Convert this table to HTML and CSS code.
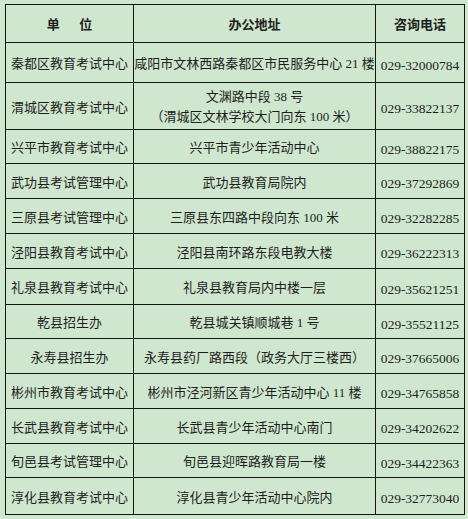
FILE: index.html
```html
<!DOCTYPE html>
<html lang="zh-CN">
<head>
<meta charset="utf-8">
<title>咨询电话</title>
<link rel="stylesheet" href="styles.css">
</head>
<body>
<table class="contacts">
  <colgroup>
    <col class="c-unit">
    <col class="c-addr">
    <col class="c-tel">
  </colgroup>
  <thead>
    <tr class="h38">
      <th>单&emsp;&ensp;位</th>
      <th>办公地址</th>
      <th>咨询电话</th>
    </tr>
  </thead>
  <tbody>
    <tr class="h40"><td>秦都区教育考试中心</td><td class="addr">咸阳市文林西路秦都区市民服务中心 21 楼</td><td class="tel">029-32000784</td></tr>
    <tr class="h47"><td>渭城区教育考试中心</td><td class="addr two">文渊路中段 38 号<br>（渭城区文林学校大门向东 100 米）</td><td class="tel">029-33822137</td></tr>
    <tr class="h34"><td>兴平市教育考试中心</td><td class="addr">兴平市青少年活动中心</td><td class="tel">029-38822175</td></tr>
    <tr class="h35"><td>武功县考试管理中心</td><td class="addr">武功县教育局院内</td><td class="tel">029-37292869</td></tr>
    <tr class="h35"><td>三原县考试管理中心</td><td class="addr">三原县东四路中段向东 100 米</td><td class="tel">029-32282285</td></tr>
    <tr class="h35"><td>泾阳县教育考试中心</td><td class="addr">泾阳县南环路东段电教大楼</td><td class="tel">029-36222313</td></tr>
    <tr class="h36"><td>礼泉县教育考试中心</td><td class="addr">礼泉县教育局内中楼一层</td><td class="tel">029-35621251</td></tr>
    <tr class="h34"><td>乾县招生办</td><td class="addr">乾县城关镇顺城巷 1 号</td><td class="tel">029-35521125</td></tr>
    <tr class="h35"><td>永寿县招生办</td><td class="addr">永寿县药厂路西段（政务大厅三楼西）</td><td class="tel">029-37665006</td></tr>
    <tr class="h35"><td>彬州市教育考试中心</td><td class="addr">彬州市泾河新区青少年活动中心 11 楼</td><td class="tel">029-34765858</td></tr>
    <tr class="h35"><td>长武县教育考试中心</td><td class="addr">长武县青少年活动中心南门</td><td class="tel">029-34202622</td></tr>
    <tr class="h34"><td>旬邑县考试管理中心</td><td class="addr">旬邑县迎晖路教育局一楼</td><td class="tel">029-34422363</td></tr>
    <tr class="h37"><td>淳化县教育考试中心</td><td class="addr">淳化县青少年活动中心院内</td><td class="tel">029-32773040</td></tr>
  </tbody>
</table>
</body>
</html>
```

FILE: styles.css
```css
html, body {
  margin: 0;
  padding: 0;
  background: #d0e7cf;
}

body {
  padding: 4px 0 0 5px;
  font-family: "Liberation Serif", "Noto Sans CJK SC", serif;
  color: #1e1e1e;
}

.contacts {
  border-collapse: collapse;
  table-layout: fixed;
  width: 459px;
  font-size: 13px;
}

.c-unit { width: 128px; }
.c-addr { width: 242px; }
.c-tel { width: 89px; }

.contacts th,
.contacts td {
  border: 1px solid #141414;
  padding: 0;
  text-align: center;
  vertical-align: middle;
  white-space: nowrap;
  line-height: 18px;
}

.contacts th {
  font-family: "Noto Sans CJK SC", sans-serif;
  font-weight: bold;
  font-size: 13px;
}

.contacts td {
  font-family: "Liberation Serif", "Noto Sans CJK SC", serif;
  padding-top: 3px;
}

.contacts td.addr.two {
  line-height: 20px;
  padding-top: 2px;
}

.contacts td.tel {
  padding-top: 6px;
  font-size: 13.5px;
}

.h34 { height: 34px; }
.h35 { height: 35px; }
.h36 { height: 36px; }
.h37 { height: 37px; }
.h38 { height: 38px; }
.h40 { height: 40px; }
.h47 { height: 47px; }
```
